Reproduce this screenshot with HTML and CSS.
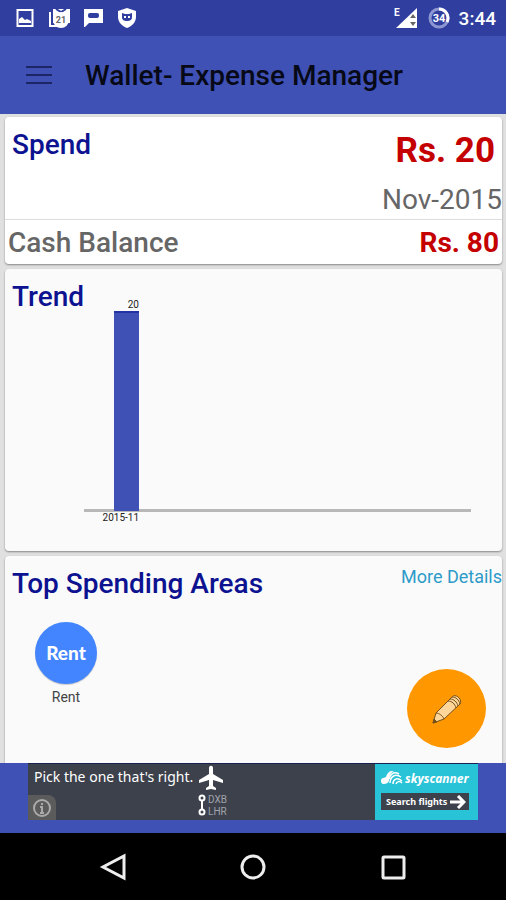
FILE: index.html
```html
<!DOCTYPE html>
<html lang="en">
<head>
    <meta charset="UTF-8">
    <meta name="viewport" content="width=device-width, initial-scale=1.0">
    <title>Wallet- Expense Manager</title>
    <link rel="stylesheet" href="styles.css">
</head>
<body>
    <div class="status-bar">
        <div class="notifications">
            <svg width="20" height="20" viewBox="0 0 20 20"><path d="M2.5 2h15v16h-15z" fill="none" stroke="#fff" stroke-width="2"/><path d="M4 15v-4l3-2 3 3 2-1 4 2v2z" fill="#fff"/></svg>
            <svg width="22" height="20" viewBox="0 0 22 20"><path d="M2 4v14h8" fill="none" stroke="#fff" stroke-width="2"/><path d="M5 1h17v14H5z" fill="#fff"/><path d="M8 1l5 3 5-3" fill="none" stroke="#303f9f" stroke-width="2"/><circle cx="13" cy="12" r="8" fill="#fff"/><text x="13" y="15" text-anchor="middle" class="badge-text">21</text></svg>
            <svg width="20" height="20" viewBox="0 0 20 20"><path d="M1 1h19v14H6l-4 4H1z" fill="#fff"/><rect x="5" y="5" width="11" height="5" rx="2" fill="#303f9f"/></svg>
            <svg width="20" height="20" viewBox="0 0 20 20"><path d="M11 0l9 3v6c0 5-4 9-9 11-5-2-9-6-9-11V3z" fill="#fff"/><path d="M6 5l3 1h4l3-1v4c0 3-2 4-5 4s-5-1-5-4z" fill="#303f9f"/><path d="M8 9h2M12 9h2" stroke="#fff" stroke-width="2"/></svg>
        </div>
        <div class="system">
            <svg width="26" height="22" viewBox="0 0 26 22"><text x="1" y="9" class="network">E</text><path d="M3 21L24 1v20z" fill="#fff"/><path d="M17 11l3-4 3 4zM17 15l3 4 3-4z" fill="#666"/></svg>
            <svg width="22" height="22" viewBox="0 0 22 22"><circle cx="11" cy="11" r="9" fill="none" stroke="#8c96d0" stroke-width="3"/><path d="M11 2a9 9 0 0 1 8 13" fill="none" stroke="#fff" stroke-width="3"/><text x="11" y="15" text-anchor="middle" class="battery">34</text></svg>
            <span class="clock">3:44</span>
        </div>
    </div>

    <header class="toolbar">
        <button class="menu-button" aria-label="Menu">
            <svg width="28" height="20" viewBox="0 0 28 20"><path d="M1 2h26M1 10h26M1 18h26" stroke="#1d2665" stroke-width="2"/></svg>
        </button>
        <h1>Wallet- Expense Manager</h1>
    </header>

    <main class="content">
        <section class="card spend-card">
            <div class="spend">
                <h2>Spend</h2>
                <div class="spend-amount">Rs. 20</div>
            </div>
            <div class="month">Nov-2015</div>
            <div class="balance">
                <span>Cash Balance</span>
                <span class="balance-amount">Rs. 80</span>
            </div>
        </section>

        <section class="card trend-card">
            <h2>Trend</h2>
            <div class="chart">
                <div class="plot">
                    <div class="column">
                        <span>20</span>
                        <div class="bar"></div>
                    </div>
                </div>
                <div class="axis-label">2015-11</div>
            </div>
        </section>

        <section class="card areas-card">
            <div class="areas-header">
                <h2>Top Spending Areas</h2>
                <a href="#">More Details</a>
            </div>
            <div class="area">
                <div class="area-icon">Rent</div>
                <div class="area-name">Rent</div>
            </div>
        </section>

        <button class="add-button" aria-label="Add expense">
            <svg width="32" height="32" viewBox="0 0 32 32"><g stroke="#74501a" stroke-width="1" stroke-linejoin="round"><path d="M2 30l3-10L21 4c3-4 11 2 8 7L13 26z" fill="#ffd699"/><path d="M5 20c3 0 7 3 8 6M17 8c4 0 7 3 8 7M19 6c4 0 7 3 8 7M21 4c4 0 7 3 8 7" fill="none"/><path d="M2 30l1-4 3 3z" fill="#74501a"/></g></svg>
        </button>
    </main>

    <div class="ad-bar">
        <div class="ad">
            <div class="ad-message">
                <div class="ad-text">Pick the one that's right.</div>
                <button class="ad-info" aria-label="Ad information">
                    <svg width="20" height="20" viewBox="0 0 20 20"><circle cx="10" cy="10" r="8" fill="none" stroke="#aaa" stroke-width="2"/><path d="M10 5v2M8 9h2v6M8 15h4" fill="none" stroke="#aaa" stroke-width="2"/></svg>
                </button>
            </div>
            <div class="flight">
                <svg width="26" height="26" viewBox="0 0 26 26"><path d="M11 9V3c0-3 4-3 4 0v6l10 6v3l-10-3v6l3 2v2l-5-1-5 1v-2l3-2v-6L1 18v-3z" fill="#fff"/></svg>
                <div class="route">
                    <svg width="8" height="22" viewBox="0 0 8 22"><path d="M4 4v14" stroke="#fff" stroke-width="2"/><circle cx="4" cy="4" r="2.5" fill="#3d414c" stroke="#fff" stroke-width="2"/><circle cx="4" cy="18" r="2.5" fill="#3d414c" stroke="#fff" stroke-width="2"/></svg>
                    <div>DXB<br>LHR</div>
                </div>
            </div>
            <div class="ad-brand">
                <div class="brand-name">
                    <svg width="22" height="14" viewBox="0 0 22 14"><path d="M0 10c0-4 4-3 5-4 1-4 4-7 8-6-4 2-5 6-5 10-1 3-8 5-8 0z" fill="#fff"/><path d="M9 12c0-6 5-10 11-6M12 13c0-5 4-7 9-3M15 13c1-3 4-3 6-1M8 8c1-5 5-8 10-5" fill="none" stroke="#fff" stroke-width="1.5"/></svg>
                    <span>skyscanner</span>
                </div>
                <a href="#" class="search-link">
                    <span>Search flights</span>
                    <svg width="16" height="14" viewBox="0 0 16 14"><path d="M0 7h14M8 1l6 6-6 6" fill="none" stroke="#fff" stroke-width="3"/></svg>
                </a>
            </div>
        </div>
    </div>

    <nav class="nav-bar">
        <button aria-label="Back"><svg width="28" height="28" viewBox="0 0 28 28"><path d="M25 3v22L4 14z"/></svg></button>
        <button aria-label="Home"><svg width="28" height="28" viewBox="0 0 28 28"><circle cx="14" cy="14" r="11"/></svg></button>
        <button aria-label="Recent apps"><svg width="28" height="28" viewBox="0 0 28 28"><rect x="4" y="4" width="21" height="21" rx="1"/></svg></button>
    </nav>
</body>
</html>
```
FILE: styles.css
```css
* {
    box-sizing: border-box;
}
body {
    display: flex;
    flex-direction: column;
    height: 100vh;
    margin: 0;
    font-family: Roboto, sans-serif;
    background: #e0e0e0;
}
h1, h2 {
    margin: 0;
    font-weight: 500;
}
button {
    padding: 0;
    border: none;
    background: none;
    cursor: pointer;
}
svg {
    display: block;
}
a {
    text-decoration: none;
}
.status-bar {
    display: flex;
    justify-content: space-between;
    align-items: center;
    height: 36px;
    padding: 0 10px 0 15px;
    background: #303f9f;
    color: #fff;
}
.notifications {
    display: flex;
    gap: 13px;
}
.system {
    display: flex;
    align-items: center;
    gap: 9px;
}
.badge-text {
    font-size: 9px;
    font-weight: 700;
    fill: #666;
}
.network {
    font-size: 10px;
    font-weight: 700;
    fill: #fff;
}
.battery {
    font-size: 11px;
    font-weight: 700;
    fill: #fff;
}
.clock {
    font-size: 19px;
    font-weight: 500;
}
.toolbar {
    display: flex;
    align-items: center;
    gap: 32px;
    height: 78px;
    padding: 0 25px;
    background: #3f51b5;
}
.toolbar h1 {
    padding-top: 2px;
    font-size: 28px;
    line-height: 32px;
    color: #070916;
}
.content {
    position: relative;
    display: flex;
    flex: 1;
    flex-direction: column;
    gap: 5px;
    min-height: 0;
    padding: 3px 4px 0 5px;
    overflow: hidden;
}
.card {
    border-radius: 4px;
    background: #fafafa;
    box-shadow: 0 1px 2px rgba(0, 0, 0, 0.4);
}
.card h2 {
    font-size: 28px;
    line-height: 32px;
    color: #0d1290;
}
.spend-card {
    background: #fff;
}
.spend {
    display: flex;
    justify-content: space-between;
    padding: 12px 7px 0;
}
.spend-amount {
    font-size: 35px;
    font-weight: 700;
    line-height: 44px;
    color: #c40000;
}
.month {
    padding: 10px 0 2px;
    font-size: 28px;
    line-height: 34px;
    text-align: right;
    color: #666;
}
.balance {
    display: flex;
    justify-content: space-between;
    padding: 6px 3px 4px;
    border-top: 1px solid #ddd;
    font-size: 28px;
    font-weight: 500;
    line-height: 34px;
    color: #666;
}
.balance-amount {
    font-weight: 700;
    color: #c40000;
}
.trend-card {
    display: grid;
    grid-template-columns: 79px 1fr;
    height: 282px;
}
.trend-card h2 {
    padding: 12px 0 0 7px;
}
.chart {
    padding: 30px 31px 0 0;
    font-size: 10px;
    line-height: 12px;
    color: #222;
}
.plot {
    display: flex;
    height: 213px;
    padding-left: 30px;
    border-bottom: 3px solid #b8b8b8;
}
.column {
    width: 25px;
    text-align: right;
}
.bar {
    height: 200px;
    background: #3f51b5;
    border-top: 2px solid #2233a5;
}
.axis-label {
    width: 55px;
    text-align: right;
}
.areas-card {
    flex: 1;
    border-radius: 4px 4px 0 0;
}
.areas-header {
    display: flex;
    justify-content: space-between;
    padding: 12px 0 0 7px;
}
.areas-header a {
    font-size: 18px;
    line-height: 18px;
    color: #2d9bc9;
}
.area {
    width: 62px;
    margin: 22px 30px 0;
    text-align: center;
}
.area-icon {
    height: 62px;
    border-radius: 50%;
    background: #4285ff;
    box-shadow: 0 1px 1px rgba(0, 0, 0, 0.2);
    font-family: Lato, sans-serif;
    font-size: 19px;
    font-weight: 900;
    line-height: 62px;
    color: #fff;
}
.area-name {
    margin-top: 4px;
    font-size: 14px;
    line-height: 18px;
    color: #444;
}
.add-button {
    position: absolute;
    right: 20px;
    bottom: 15px;
    display: grid;
    place-items: center;
    width: 79px;
    height: 79px;
    border-radius: 50%;
    background: #ff9800;
}
.ad-bar {
    height: 70px;
    padding: 0 28px;
    background: #3f51b5;
}
.ad {
    display: flex;
    height: 57px;
    border-top: 1px solid #17204f;
    background: #3d414c;
    color: #fff;
}
.ad-message {
    display: flex;
    flex-direction: column;
    justify-content: space-between;
    width: 168px;
}
.ad-text {
    padding-left: 6px;
    font-family: "Noto Sans", sans-serif;
    font-size: 14px;
    line-height: 26px;
    white-space: nowrap;
}
.ad-info {
    display: grid;
    place-items: center;
    width: 28px;
    height: 25px;
    border-radius: 0 8px 0 0;
    background: #5b5b5b;
}
.flight {
    flex: 1;
    padding: 1px 0 0 2px;
}
.route {
    display: flex;
    gap: 2px;
    margin-top: 3px;
    font-size: 10px;
    line-height: 12px;
    color: #a0a3ab;
}
.ad-brand {
    width: 103px;
    padding: 6px 9px 0 6px;
    background: #29c3d8;
}
.brand-name {
    display: flex;
    align-items: center;
    gap: 2px;
    height: 16px;
    font-family: "Noto Sans", sans-serif;
    font-size: 12px;
    font-style: italic;
    font-weight: 700;
}
.search-link {
    display: flex;
    justify-content: space-between;
    align-items: center;
    height: 17px;
    margin-top: 7px;
    padding: 0 3px 0 5px;
    background: #3d414c;
    font-family: "Noto Sans", sans-serif;
    font-size: 9px;
    font-weight: 700;
    color: #fff;
    white-space: nowrap;
}
.nav-bar {
    display: flex;
    justify-content: center;
    gap: 112px;
    height: 67px;
    background: #000;
}
.nav-bar svg {
    fill: none;
    stroke: #eee;
    stroke-width: 3;
}
```
